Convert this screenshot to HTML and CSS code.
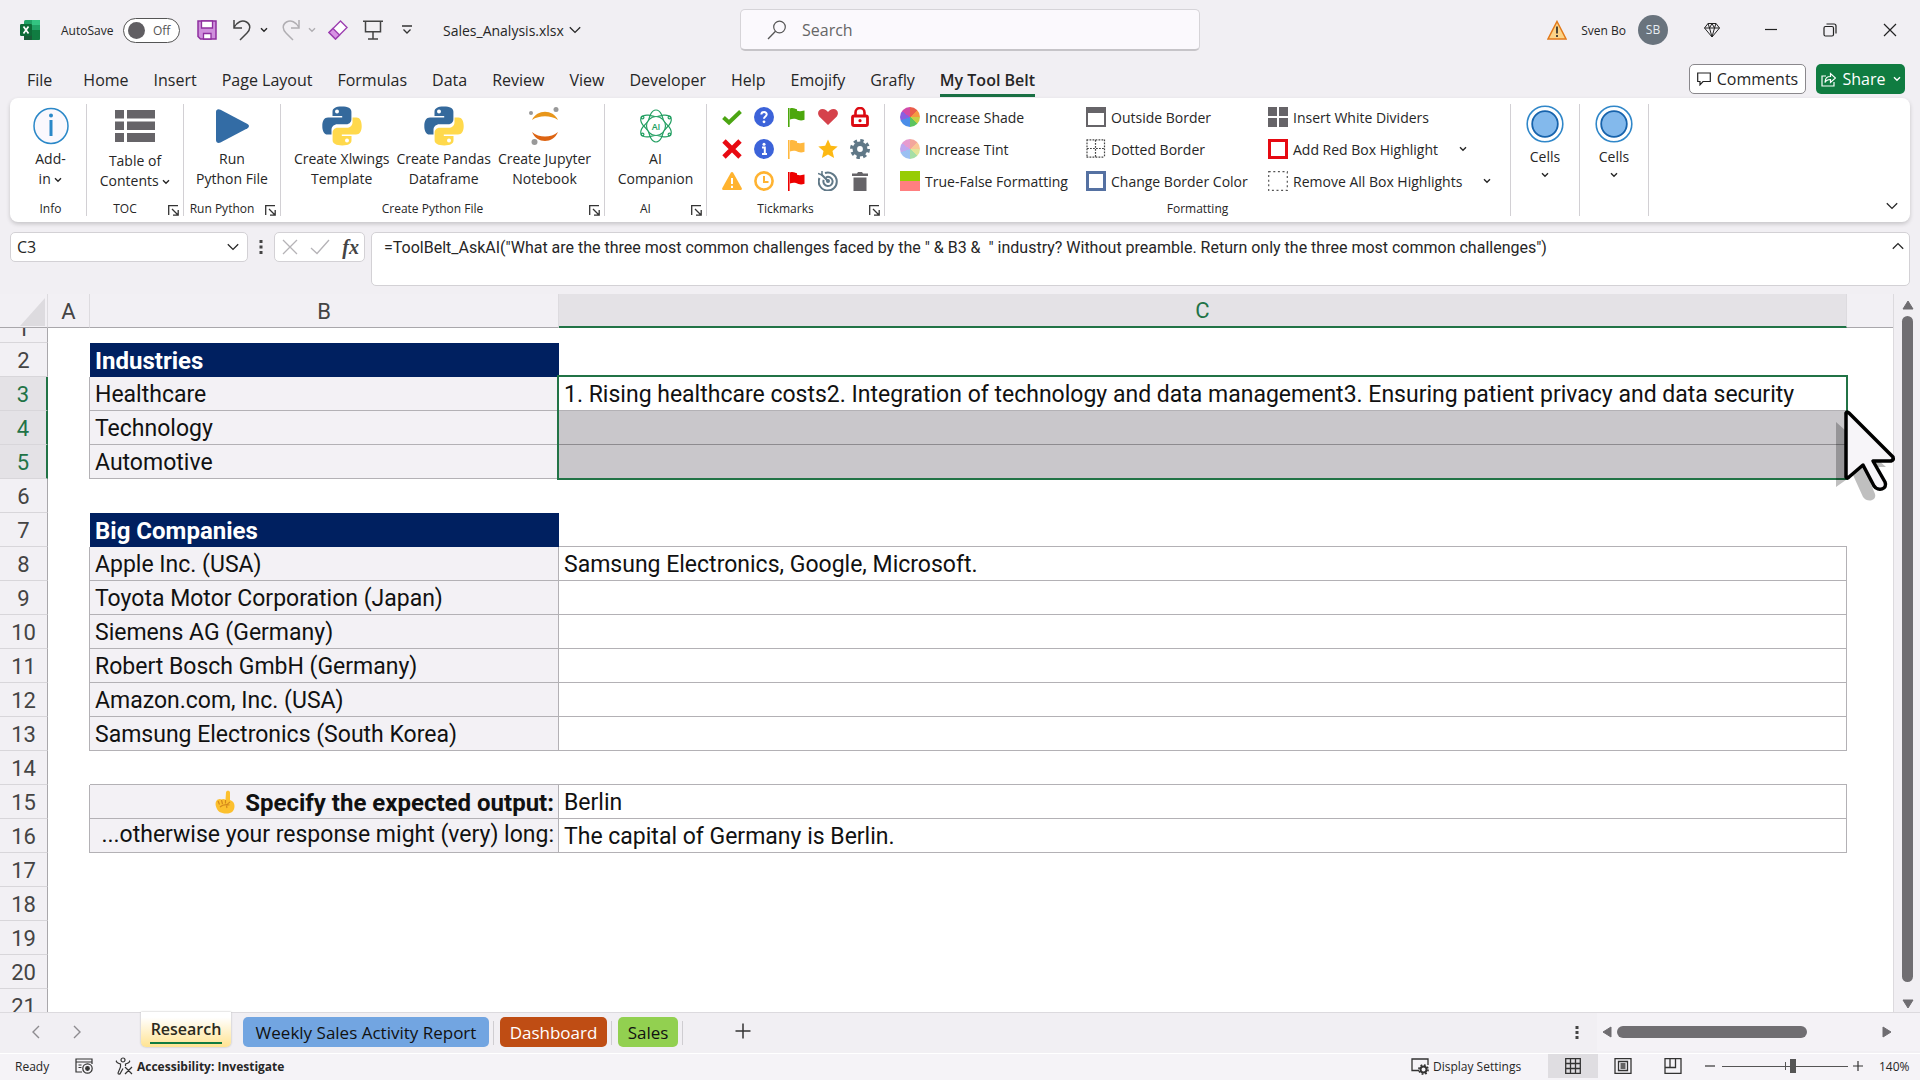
FILE: index.html
```html
<!DOCTYPE html>
<html lang="en">
<head>
<meta charset="utf-8">
<title>Sales_Analysis.xlsx</title>
<link rel="stylesheet" href="styles.css">
</head>
<body>
<svg class="sprite" aria-hidden="true">
  <symbol id="chev" viewBox="0 0 8 6"><path d="M1 1.2l3 3 3-3" fill="none" stroke="currentColor" stroke-width="1.4"/></symbol>
  <symbol id="chev-lg" viewBox="0 0 12 8"><path d="M.8 1.2L6 6.4l5.2-5.2" fill="none" stroke="currentColor" stroke-width="1.3"/></symbol>
  <symbol id="launch" viewBox="0 0 11 11"><path d="M10 .7H.7V10M4 4l5.5 5.5M10.2 5v5.2H5" fill="none" stroke="#333" stroke-width="1.3"/></symbol>
  <symbol id="python" viewBox="0 0 40 40">
    <path d="M19.8.5c-6.500 0-9.300 2-9.300 5.200V10h9.700v1.500H6C2.300 11.500.3 14.600.3 20s2 8.600 5.200 8.600h4v-4.800c0-3.300 2.600-5.600 5.900-5.600h9c2.900 0 5-2.300 5-5V5.700C29.400 2.400 26 .5 19.800.5z" fill="#34699c"/>
    <path d="M20.200 39.500c6.500 0 9.300-2 9.300-5.200V30h-9.700v-1.500H34c3.700 0 5.700-3.100 5.700-8.500s-2-8.600-5.200-8.600h-4v4.800c0 3.300-2.600 5.600-5.900 5.600h-9c-2.900 0-5 2.300-5 5v7.500c0 3.300 3.400 5.200 9.600 5.200z" fill="#ffd94c"/>
    <circle cx="15" cy="5.500" r="2" fill="#fff"/><circle cx="25" cy="34.500" r="2" fill="#fff"/>
  </symbol>
  <symbol id="flag" viewBox="0 0 20 20"><path d="M2 1h1.600v19H2zM4 1.500c3-1.200 5 .3 7 .8v1.500c2 .8 4 .5 7.500-.2v9.200c-3.500 1.200-6 .5-8.500-.7-2-.6-4-.3-6 .4z" fill="currentColor"/></symbol>
  <symbol id="cells" viewBox="0 0 38 38"><circle cx="19" cy="19" r="17.800" fill="#fff" stroke="#3087c9" stroke-width="1.600"/><circle cx="19" cy="19" r="12.800" fill="#83b9ec" stroke="#1763ac" stroke-width="1.800"/></symbol>
</svg>

<header class="titlebar">
  <div class="title-left">
    <svg class="logo" viewBox="0 0 20 20"><rect x="4" width="16" height="20" rx="1.500" fill="#21a366"/><path d="M12 0h8v5h-8z" fill="#33c481"/><path d="M4 10h8v10H4z" fill="#185c37"/><path d="M12 10h8v8.500a1.500 1.500 0 0 1-1.500 1.500H12z" fill="#107c41"/><rect y="4" width="12" height="12" rx="1.200" fill="#0d6b37"/><path d="M3.500 6.500l5 7M8.500 6.500l-5 7" stroke="#fff" stroke-width="1.700"/></svg>
    <span class="autosave">AutoSave</span>
    <button class="toggle" aria-label="AutoSave off"><i></i>Off</button>
    <button class="plain save" aria-label="Save"><svg width="20" height="20" viewBox="0 0 20 20"><path d="M1 1h18v18H3.500L1 16.500z" fill="#cf8fdc" stroke="#8e2f9f" stroke-width="1.500"/><path d="M4.500 1h11v7h-11zM6.500 19v-5.500h7.500V19z" fill="#fff" stroke="#8e2f9f" stroke-width="1.300"/></svg></button>
    <button class="plain undo" aria-label="Undo"><svg width="20" height="22" viewBox="0 0 20 22"><path d="M2 1v8h8M2 8.500C5 3 10 .5 14.500 3c5 3 3.500 8 .5 11l-7 7" fill="none" stroke="#444" stroke-width="1.500"/></svg></button>
    <svg class="c1" width="8" height="6"><use href="#chev"/></svg>
    <button class="plain redo" aria-label="Redo"><svg width="20" height="22" viewBox="0 0 20 22"><path d="M18 1v8h-8M18 8.500C15 3 10 .5 5.500 3c-5 3-3.500 8-.5 11l7 7" fill="none" stroke="#b0aeb2" stroke-width="1.500"/></svg></button>
    <svg class="c2" width="8" height="6"><use href="#chev"/></svg>
    <button class="plain eraser" aria-label="Clear"><svg width="20" height="20" viewBox="0 0 20 20"><path d="M12.500 1L19 7.500 7.500 19 1 12.500z" fill="#fff" stroke="#9c3fb0" stroke-width="1.400"/><path d="M5 8.500l6.500 6.500-4 4L1 12.500z" fill="#d793e3" stroke="#9c3fb0" stroke-width="1.400"/></svg></button>
    <button class="plain present" aria-label="Present"><svg width="20" height="20" viewBox="0 0 20 20"><path d="M0 1.200h20M2.500 1.200v10.600h15V1.200M10 12v6.800M5 19h10" fill="none" stroke="#444" stroke-width="1.500"/></svg></button>
    <button class="plain custom" aria-label="Customize toolbar"><svg width="10" height="10" viewBox="0 0 10 10"><path d="M0 1h10M1.500 4.500L5 8l3.500-3.500" fill="none" stroke="#333" stroke-width="1.300"/></svg></button>
    <button class="plain filename">Sales_Analysis.xlsx <svg width="12" height="8"><use href="#chev-lg"/></svg></button>
  </div>
  <label class="search">
    <svg width="20" height="20" viewBox="0 0 20 20"><circle cx="12.500" cy="7" r="5.800" fill="none" stroke="#555" stroke-width="1.200"/><path d="M8.500 11.200L1 19" stroke="#555" stroke-width="1.300"/></svg>
    <input type="text" placeholder="Search" aria-label="Search">
  </label>
  <div class="title-right">
    <svg width="20" height="20" viewBox="0 0 20 20"><path d="M10 1.500L19 19H1z" fill="#fcd488" stroke="#e27a1a" stroke-width="1.500"/><path d="M10 6.500v7M10 15v2" stroke="#222" stroke-width="1.600"/></svg>
    <span class="user">Sven Bo</span>
    <span class="avatar">SB</span>
    <button class="plain gem" aria-label="Premium"><svg width="16" height="16" viewBox="0 0 16 16"><path d="M4 1.500h8L15.500 6 8 15 .5 6zM.5 6h15M4 1.500L5.500 6 8 15l2.500-9L12 1.500M5.500 6L8 1.500 10.500 6" fill="none" stroke="#222" stroke-width="1"/></svg></button>
    <button class="plain win" aria-label="Minimize"><svg width="12" height="12" viewBox="0 0 12 12"><path d="M0 5.500h12" stroke="#222" stroke-width="1.200"/></svg></button>
    <button class="plain win" aria-label="Restore"><svg width="14" height="14" viewBox="0 0 14 14"><rect x="1" y="3.500" width="9.500" height="9.500" rx="1.500" fill="none" stroke="#222" stroke-width="1.200"/><path d="M3.500 1h7.500a2 2 0 0 1 2 2v7.500" fill="none" stroke="#222" stroke-width="1.200"/></svg></button>
    <button class="plain win" aria-label="Close"><svg width="14" height="14" viewBox="0 0 14 14"><path d="M1 1l12 12M13 1L1 13" stroke="#222" stroke-width="1.200"/></svg></button>
  </div>
</header>

<nav class="tabs">
  <a href="#" class="file">File</a><a href="#">Home</a><a href="#">Insert</a><a href="#">Page Layout</a><a href="#">Formulas</a><a href="#">Data</a><a href="#">Review</a><a href="#">View</a><a href="#">Developer</a><a href="#">Help</a><a href="#">Emojify</a><a href="#">Grafly</a><a href="#" class="current">My Tool Belt</a>
  <div class="tab-actions">
    <button class="comments"><svg width="14" height="14" viewBox="0 0 14 14"><path d="M.7 1h12.600v8.500H6L3 12.800V9.500H.7z" fill="none" stroke="#222" stroke-width="1.200"/></svg>Comments</button>
    <button class="share"><svg width="15" height="15" viewBox="0 0 15 15"><path d="M5 4H1v10h12v-4M4 10.500C4 6 6.500 4.500 9.500 4.500V1.500l5 4.500-5 4.500v-3C7 7.500 5 8.500 4 10.500z" fill="none" stroke="#fff" stroke-width="1.200"/></svg>Share<svg width="8" height="6"><use href="#chev"/></svg></button>
  </div>
</nav>

<section class="ribbon">
  <div class="group g-info">
    <div class="tools"><button class="big"><svg viewBox="0 0 38 38"><ellipse cx="19" cy="19" rx="17" ry="17.500" fill="#faf8fd" stroke="#2b88c8" stroke-width="1.500"/><path d="M19 13v16" stroke="#2b88c8" stroke-width="3"/><circle cx="19" cy="8.500" r="2" fill="#2b88c8"/></svg>Add-<br>in <svg class="dd"><use href="#chev"/></svg></button></div>
    <div class="name">Info</div>
  </div>
  <div class="group g-toc">
    <div class="tools"><button class="big low"><svg viewBox="0 0 38 38"><path d="M-1 3h9v8.500h-9zM11 3h28v8.500H11zM-1 14.500h9V23h-9zM11 14.500h28V23H11zM-1 26h9v9h-9zM11 26h28v9H11z" fill="#666468"/></svg>Table of<br>Contents <svg class="dd"><use href="#chev"/></svg></button></div>
    <div class="name">TOC<svg class="launch"><use href="#launch"/></svg></div>
  </div>
  <div class="group g-run">
    <div class="tools"><button class="big"><svg viewBox="0 0 38 38"><path d="M3 5c0-2.500 2-3.500 4.500-2.300l27 14.300c2 1.200 2 3 0 4.200L7.500 35.500C5 36.500 3 35.500 3 33z" fill="#336ca5"/></svg>Run<br>Python File</button></div>
    <div class="name">Run Python<svg class="launch"><use href="#launch"/></svg></div>
  </div>
  <div class="group g-python">
    <div class="tools">
      <button class="big"><svg class="py"><use href="#python"/></svg>Create Xlwings<br>Template</button>
      <button class="big"><svg class="py"><use href="#python"/></svg>Create Pandas<br>Dataframe</button>
      <button class="big"><svg viewBox="0 0 38 38"><path d="M6 13c5-11 21-11 26 0-7-5-19-5-26 0z" fill="#e8961a"/><path d="M6 25c5 12 21 12 26 0-7 6-19 6-26 0z" fill="#dd6412"/><circle cx="30" cy="2.500" r="2.500" fill="#999"/><circle cx="5" cy="6" r="2" fill="#999"/><circle cx="8.500" cy="35" r="3" fill="#999"/></svg>Create Jupyter<br>Notebook</button>
    </div>
    <div class="name">Create Python File<svg class="launch"><use href="#launch"/></svg></div>
  </div>
  <div class="group g-ai">
    <div class="tools"><button class="big"><svg viewBox="0 0 38 38" fill="none" stroke="#239f62" stroke-width="1.200"><ellipse cx="19" cy="19" rx="8" ry="16"/><ellipse cx="19" cy="19" rx="8" ry="17" transform="rotate(60 19 19)"/><ellipse cx="19" cy="19" rx="8" ry="17" transform="rotate(120 19 19)"/><circle cx="19" cy="19" r="9.500" fill="#fff"/><circle cx="5.500" cy="10.500" r="1.400"/><circle cx="32.500" cy="10.500" r="1.400"/><circle cx="5.500" cy="27.500" r="1.400"/><circle cx="32.500" cy="27.500" r="1.400"/><text x="19" y="23" text-anchor="middle" class="ai-text">AI</text></svg>AI<br>Companion</button></div>
    <div class="name">AI<svg class="launch"><use href="#launch"/></svg></div>
  </div>
  <div class="group g-tick">
    <div class="tools ticks">
      <button aria-label="Check"><svg viewBox="0 0 20 20"><path d="M1.500 10.500l5.500 5L18.500 4.500" fill="none" stroke="#4ba512" stroke-width="4"/></svg></button>
      <button aria-label="Question"><svg viewBox="0 0 20 20"><circle cx="10" cy="10" r="10" fill="#3c63d9"/><path d="M7.300 7.500c.2-3.500 5.600-3.200 5.400 0-.1 2-2.700 2-2.700 4.300" fill="none" stroke="#fff" stroke-width="2"/><circle cx="10" cy="14.800" r="1.400" fill="#fff"/></svg></button>
      <button class="green" aria-label="Green flag"><svg><use href="#flag"/></svg></button>
      <button aria-label="Heart"><svg viewBox="0 0 20 20"><path d="M10 18L1.200 9.500C-1.500 5.500 1 2 4.500 2 7 2 9 3.500 10 5c1-1.500 3-3 5.500-3 3.500 0 6 3.500 3.300 7.500z" fill="#d5424b"/></svg></button>
      <button aria-label="Lock"><svg viewBox="0 0 20 20"><rect x="2.500" y="9" width="15" height="9.500" rx="1.500" fill="#fff" stroke="#dc0a12" stroke-width="2.800"/><path d="M5.500 8V5.500a4.500 4.500 0 0 1 9 0V8" fill="none" stroke="#dc0a12" stroke-width="2.600"/><circle cx="10" cy="13.700" r="1.600" fill="#dc0a12"/></svg></button>
      <button aria-label="Cross"><svg viewBox="0 0 20 20"><path d="M2 2l16 16M18 2L2 18" stroke="#e80a12" stroke-width="4.800"/></svg></button>
      <button aria-label="Information"><svg viewBox="0 0 20 20"><circle cx="10" cy="10" r="10" fill="#3c63d9"/><path d="M8 8.500h2.800V15M8 15h5" fill="none" stroke="#fff" stroke-width="2"/><circle cx="10" cy="5.200" r="1.500" fill="#fff"/></svg></button>
      <button class="amber" aria-label="Amber flag"><svg><use href="#flag"/></svg></button>
      <button aria-label="Star"><svg viewBox="0 0 20 20"><path d="M10 .5l2.800 6.200 6.900.7-5.200 4.600 1.600 7L10 15.500 3.900 19l1.600-7L.3 7.400l6.900-.7z" fill="#fdb913"/></svg></button>
      <button aria-label="Settings"><svg viewBox="0 0 20 20"><circle cx="10" cy="10" r="8.400" fill="none" stroke="#607887" stroke-width="3.200" stroke-dasharray="3.400 3.200"/><circle cx="10" cy="10" r="5.200" fill="#fff" stroke="#607887" stroke-width="4.600"/></svg></button>
      <button aria-label="Warning"><svg viewBox="0 0 20 20"><path d="M8.800 1.800a1.400 1.400 0 0 1 2.400 0L19.700 17c.5 1-.2 2-1.200 2h-17c-1 0-1.700-1-1.200-2z" fill="#ffb32f"/><path d="M10 7v6M10 14.800v2.200" stroke="#fff" stroke-width="2"/></svg></button>
      <button aria-label="Clock"><svg viewBox="0 0 20 20"><circle cx="10" cy="10" r="8.600" fill="#fff" stroke="#ffb332" stroke-width="2.600"/><path d="M10 5v6h4.500" fill="none" stroke="#ffb332" stroke-width="2"/></svg></button>
      <button class="red" aria-label="Red flag"><svg><use href="#flag"/></svg></button>
      <button aria-label="Target"><svg viewBox="0 0 20 20" fill="none" stroke="#607887" stroke-width="2"><path d="M7 2a9 9 0 1 1-5.500 5M8 6.300a4.600 4.600 0 1 1-2.300 2.500M3 3l7 7" /><circle cx="10" cy="10" r="1"/><path d="M0 2.500L4 4V0" stroke-width="1.500"/></svg></button>
      <button aria-label="Delete"><svg viewBox="0 0 20 20"><path d="M2 2.500h5L8 1h4l1 1.500h5V5H2zM3.500 6.500h13V20h-13z" fill="#666468"/></svg></button>
    </div>
    <div class="name">Tickmarks<svg class="launch"><use href="#launch"/></svg></div>
  </div>
  <div class="group g-format">
    <div class="tools format">
      <button><i class="wheel"></i>Increase Shade</button>
      <button><svg viewBox="0 0 20 20"><path d="M1 1h18v18H1z" fill="#fff" stroke="#666468" stroke-width="2"/><path d="M0 0h20v6H0z" fill="#666468"/></svg>Outside Border</button>
      <button><svg viewBox="0 0 20 20"><path d="M0 0h9v9H0zM11 0h9v9h-9zM0 11h9v9H0zM11 11h9v9h-9z" fill="#666468"/></svg>Insert White Dividers</button>
      <button><i class="wheel tint"></i>Increase Tint</button>
      <button><svg viewBox="0 0 20 20"><path d="M1 .5v18M18.500 .5v18M.5 .8h18M.5 18.200h18M9.500 1v17M1 9.500h17" fill="none" stroke="#444" stroke-width="1.200" stroke-dasharray="1.800 1.200"/></svg>Dotted Border</button>
      <button><svg viewBox="0 0 20 20"><path d="M1.500 1.500h17v17h-17z" fill="#fff" stroke="#e60a12" stroke-width="3"/></svg>Add Red Box Highlight<svg class="dd"><use href="#chev"/></svg></button>
      <button><svg viewBox="0 0 20 20"><path d="M0 0h20v10H0z" fill="#97cc04"/><path d="M0 10h20v10H0z" fill="#ff7f80"/></svg>True-False Formatting</button>
      <button><svg viewBox="0 0 20 20"><path d="M1.500 1.500h17v17h-17z" fill="#fff" stroke="#5571a2" stroke-width="3"/></svg>Change Border Color</button>
      <button><svg viewBox="0 0 20 20"><path d="M.7.700h18.600v18.600H.7z" fill="none" stroke="#555" stroke-width="1.200" stroke-dasharray="2 2.600"/></svg>Remove All Box Highlights<svg class="dd"><use href="#chev"/></svg></button>
    </div>
    <div class="name">Formatting</div>
  </div>
  <div class="group g-cells"><div class="tools"><button class="big cells"><svg><use href="#cells"/></svg>Cells<svg class="dd"><use href="#chev"/></svg></button></div></div>
  <div class="group g-cells"><div class="tools"><button class="big cells"><svg><use href="#cells"/></svg>Cells<svg class="dd"><use href="#chev"/></svg></button></div></div>
  <button class="plain collapse" aria-label="Collapse ribbon"><svg width="12" height="8"><use href="#chev-lg"/></svg></button>
</section>

<section class="formula-row">
  <label class="namebox"><input type="text" value="C3" aria-label="Name box"><svg width="12" height="8"><use href="#chev-lg"/></svg></label>
  <svg class="dots" width="4" height="16" viewBox="0 0 4 16"><path d="M.5 1h3v3h-3zM.5 6.500h3v3h-3zM.5 12h3v3h-3z" fill="#444"/></svg>
  <div class="fx">
    <button class="plain" aria-label="Cancel"><svg width="16" height="16" viewBox="0 0 16 16"><path d="M1 1l14 14M15 1L1 15" stroke="#b5b3b7" stroke-width="1.300"/></svg></button>
    <button class="plain" aria-label="Enter"><svg width="20" height="16" viewBox="0 0 20 16"><path d="M1 9l6 5.500L19 1" fill="none" stroke="#b5b3b7" stroke-width="1.300"/></svg></button>
    <button class="plain fn">fx</button>
  </div>
  <div class="formula">
    <textarea rows="1" aria-label="Formula">=ToolBelt_AskAI("What are the three most common challenges faced by the " &amp; B3 &amp;  " industry? Without preamble. Return only the three most common challenges")</textarea>
    <svg class="up" width="12" height="8"><use href="#chev-lg"/></svg>
  </div>
</section>

<main class="sheet">
  <div class="grid">
    <table>
      <colgroup><col class="w-row"><col class="w-a"><col class="w-b"><col><col class="w-d"></colgroup>
      <thead><tr><th class="corner"><svg width="25" height="28" viewBox="0 0 25 28"><path d="M25 0v28H0z" fill="#dddbdf"/></svg></th><th>A</th><th>B</th><th class="on">C</th><th></th></tr></thead>
      <tbody>
        <tr class="first"><th><div>1</div></th><td></td><td></td><td></td><td></td></tr>
        <tr><th>2</th><td></td><td class="head">Industries</td><td></td><td></td></tr>
        <tr><th class="on">3</th><td></td><td class="fill">Healthcare</td><td class="box active">1. Rising healthcare costs2. Integration of technology and data management3. Ensuring patient privacy and data security
          <div class="selection"><svg class="cursor" width="76" height="108" viewBox="0 0 76 108"><path d="M7 21v65l17-12 10 22c4 6 14 4 12-3L35 66h22z" fill="#000" opacity=".25"/><path d="M17 12v64q1 2 3 0l14-12 11 21c4 6 14 3 11-4L44 60h18q3-1 2-4L20 12q-2-2-3 0z" fill="#f7f5f9" stroke="#000" stroke-width="3.500" stroke-linejoin="round"/></svg></div></td><td></td></tr>
        <tr><th class="on">4</th><td></td><td class="fill">Technology</td><td class="box picked"></td><td></td></tr>
        <tr><th class="on">5</th><td></td><td class="fill">Automotive</td><td class="box picked"></td><td></td></tr>
        <tr><th>6</th><td></td><td></td><td></td><td></td></tr>
        <tr><th>7</th><td></td><td class="head">Big Companies</td><td class="under"></td><td></td></tr>
        <tr><th>8</th><td></td><td class="fill">Apple Inc. (USA)</td><td class="box">Samsung Electronics, Google, Microsoft.</td><td></td></tr>
        <tr><th>9</th><td></td><td class="fill">Toyota Motor Corporation (Japan)</td><td class="box"></td><td></td></tr>
        <tr><th>10</th><td></td><td class="fill">Siemens AG (Germany)</td><td class="box"></td><td></td></tr>
        <tr><th>11</th><td></td><td class="fill">Robert Bosch GmbH (Germany)</td><td class="box"></td><td></td></tr>
        <tr><th>12</th><td></td><td class="fill">Amazon.com, Inc. (USA)</td><td class="box"></td><td></td></tr>
        <tr><th>13</th><td></td><td class="fill">Samsung Electronics (South Korea)</td><td class="box"></td><td></td></tr>
        <tr><th>14</th><td></td><td class="under left"></td><td class="under"></td><td></td></tr>
        <tr><th>15</th><td></td><td class="fill right strong"><svg class="hand" width="22" height="24" viewBox="0 0 22 24"><path d="M12 2.500c0-2.500 4-2.500 4 0V10c3 1 4.500 3 4.500 6 0 5-3 7.500-8 7.500-6 0-9-2-10.500-7C1 13.500 2 10 4 9.500c1.500-1 3-.5 3.500 0 1-.8 3-.8 4 .3z" fill="#fcc02e"/><path d="M4 11l1.500 3.500M7.500 10l1 4M11.500 10v3.500M6 17c3-3 7-2.500 9.500-2M16 12c-3 2-4 4-3 6" fill="none" stroke="#d4881c" stroke-width="1.200"/></svg>Specify the expected output:</td><td class="box">Berlin</td><td></td></tr>
        <tr><th>16</th><td></td><td class="fill right high">...otherwise your response might (very) long:</td><td class="box">The capital of Germany is Berlin.</td><td></td></tr>
        <tr><th>17</th><td></td><td></td><td></td><td></td></tr>
        <tr><th>18</th><td></td><td></td><td></td><td></td></tr>
        <tr><th>19</th><td></td><td></td><td></td><td></td></tr>
        <tr><th>20</th><td></td><td></td><td></td><td></td></tr>
        <tr><th>21</th><td></td><td></td><td></td><td></td></tr>
      </tbody>
    </table>
  </div>
  <div class="vscroll">
    <svg width="12" height="10" viewBox="0 0 12 10"><path d="M6 1l5 8H1z" fill="#6f6d71" stroke="#6f6d71" stroke-linejoin="round"/></svg>
    <i></i>
    <svg width="12" height="10" viewBox="0 0 12 10"><path d="M6 9L1 1h10z" fill="#6f6d71" stroke="#6f6d71" stroke-linejoin="round"/></svg>
  </div>
</main>

<nav class="sheetbar">
  <div class="arrows"><svg width="8" height="14" viewBox="0 0 8 14"><path d="M7 1L1 7l6 6" fill="none" stroke="#8d8b8f" stroke-width="1.400"/></svg><svg width="8" height="14" viewBox="0 0 8 14"><path d="M1 1l6 6-6 6" fill="none" stroke="#8d8b8f" stroke-width="1.400"/></svg></div>
  <button class="research"><span>Research</span></button>
  <div class="slot"><button class="weekly">Weekly Sales Activity Report</button></div>
  <div class="slot"><button class="dash">Dashboard</button></div>
  <div class="slot last"><button class="sales">Sales</button></div>
  <button class="plain add" aria-label="New sheet"><svg width="16" height="16" viewBox="0 0 16 16"><path d="M8 .5v15M.5 8h15" stroke="#333" stroke-width="1.500"/></svg></button>
  <div class="hwrap">
    <svg width="4" height="16" viewBox="0 0 4 16"><path d="M.5 2h3v3h-3zM.5 7h3v3h-3zM.5 12h3v3h-3z" fill="#444"/></svg>
    <div class="hscroll">
      <svg width="10" height="12" viewBox="0 0 10 12"><path d="M1 6l8-5v10z" fill="#6f6d71" stroke="#6f6d71" stroke-linejoin="round"/></svg>
      <div class="track"><i></i></div>
      <svg width="10" height="12" viewBox="0 0 10 12"><path d="M9 6L1 1v10z" fill="#6f6d71" stroke="#6f6d71" stroke-linejoin="round"/></svg>
    </div>
  </div>
</nav>

<footer class="status">
  <span class="ready">Ready</span>
  <svg class="rec" width="18" height="16" viewBox="0 0 18 16" fill="none" stroke="#333" stroke-width="1.200"><path d="M7 14H1V1h16v5M1 4h16M3.500 7h3M3.500 9.500h3"/><circle cx="12.500" cy="10.500" r="4.700"/><circle cx="12.500" cy="10.500" r="1.800" fill="#333"/></svg>
  <svg width="18" height="18" viewBox="0 0 18 18" fill="none" stroke="#333" stroke-width="1.200"><circle cx="8" cy="3" r="2"/><path d="M1.500 3.500C.5 5 3 6 5.500 7v3L3 16c0 1.500 2 1.500 2.500 0L8 11.500M14.500 3.500c1 1.500-1.500 2.500-4 3.500v2M10 10l7 7M17 10l-7 7"/></svg>
  <strong>Accessibility: Investigate</strong>
  <div class="status-right">
    <svg width="18" height="18" viewBox="0 0 18 18" fill="none" stroke="#333" stroke-width="1.300"><path d="M7 13.500H1V2h16v6M4 13.500h4"/><circle cx="12.500" cy="12.500" r="3" stroke-width="2"/><circle cx="12.500" cy="12.500" r="4.600" stroke-dasharray="1.800 1.800" stroke-width="1.600"/></svg>
    <span class="disp">Display Settings</span>
    <button class="plain view sel" aria-label="Normal view"><svg width="16" height="16" viewBox="0 0 16 16"><path d="M.7.700h14.600v14.600H.7zM5.500.7v14.600M10.500.7v14.600M.7 5.500h14.600M.7 10.500h14.600" fill="none" stroke="#333" stroke-width="1.300"/></svg></button>
    <button class="plain view" aria-label="Page layout view"><svg width="18" height="16" viewBox="0 0 18 16"><path d="M1 .7h16v14.600H1zM4.500 3.500h9v9h-9zM6.500 6h5M6.500 8h5M6.500 10h5" fill="none" stroke="#333" stroke-width="1.300"/></svg></button>
    <button class="plain view" aria-label="Page break view"><svg width="18" height="16" viewBox="0 0 18 16"><path d="M1 .7h16v14.600H1zM1 9.500h10.500V.7M6 .7v8.800" fill="none" stroke="#333" stroke-width="1.300"/></svg></button>
    <svg class="minus" width="10" height="10" viewBox="0 0 10 10"><path d="M0 5h10" stroke="#333" stroke-width="1.200"/></svg>
    <input type="range" min="0" max="100" value="57" aria-label="Zoom">
    <svg width="10" height="10" viewBox="0 0 10 10"><path d="M0 5h10M5 0v10" stroke="#333" stroke-width="1.200"/></svg>
    <span class="pct">140%</span>
  </div>
</footer>
</body>
</html>
```
FILE: styles.css
```css
* { box-sizing: border-box; }
body {
  margin: 0;
  height: 100vh;
  display: flex;
  flex-direction: column;
  overflow: hidden;
  background: #f1eff3;
  color: #262626;
  font-family: "Open Sans", "Noto Sans", sans-serif;
  font-size: 14px;
}
svg { flex: none; display: block; }
.sprite { display: none; }
button { font: inherit; color: inherit; margin: 0; padding: 0; border: 0; background: none; white-space: nowrap; }
.plain { display: flex; align-items: center; }
input, textarea { font: inherit; color: inherit; border: 0; padding: 0; background: none; outline: none; min-width: 0; }
a { color: inherit; text-decoration: none; }

/* title bar */
.titlebar { display: grid; grid-template-columns: 740fr 460fr 720fr; height: 60px; align-items: center; flex: none; }
.title-left { display: flex; align-items: center; padding-left: 20px; }
.logo { width: 20px; height: 20px; }
.autosave { font-size: 12px; width: 54px; margin: 0 8px 0 21px; }
.toggle { display: flex; align-items: center; gap: 8px; width: 57px; height: 25px; padding-left: 4px; border: 1px solid #555; border-radius: 13px; background: #fff; font-size: 12px; color: #555; }
.toggle i { width: 17px; height: 17px; border-radius: 50%; background: #605e62; }
.save { margin-left: 17px; }
.undo { margin-left: 15px; }
.c1 { margin-left: 8px; }
.redo { margin-left: 13px; }
.c2 { margin-left: 7px; color: #b0aeb2; }
.eraser { margin-left: 12px; }
.present { margin-left: 15px; }
.custom { margin-left: 19px; }
.filename { margin-left: 31px; gap: 5px; }
.search { display: flex; align-items: center; gap: 15px; height: 42px; padding: 0 26px; background: #fbf9fd; border: 1px solid #d6d4d8; border-bottom: 2px solid #c6c4c8; border-radius: 5px; font-size: 16px; }
.search input { flex: 1; }
.search input::placeholder { color: #666; opacity: 1; }
.title-right { display: flex; align-items: center; justify-content: flex-end; padding-right: 23px; }
.user { font-size: 12px; margin: 0 12px 0 14px; }
.avatar { width: 30px; height: 30px; border-radius: 50%; background: #69737d; color: #e8edf2; font-size: 12px; line-height: 30px; text-align: center; }
.gem { margin: 0 45px 0 36px; }
.win { margin-right: 46px; }
.win:last-child { margin-right: 0; }

/* ribbon tabs */
.tabs { display: flex; gap: 25px; align-items: center; height: 38px; padding: 0 15px 0 27px; font-size: 16px; flex: none; }
.tabs a { line-height: 30px; height: 35px; padding-top: 3px; white-space: nowrap; }
.tabs .file { margin-right: 6px; }
.tabs .current { font-weight: 600; border-bottom: 3px solid #1a7044; }
.tab-actions { display: flex; gap: 10px; margin-left: auto; }
.comments, .share { display: flex; align-items: center; justify-content: center; height: 30px; border-radius: 5px; }
.comments { gap: 6px; width: 117px; border: 1px solid #8a888c; background: #fff; }
.share { gap: 7px; width: 89px; background: #107c41; color: #fff; }

/* ribbon */
.ribbon { display: flex; height: 124px; margin: 0 10px; padding: 6px 0; background: #fff; border-radius: 8px; box-shadow: 0 2px 4px #0000002e; flex: none; }
.group { display: flex; flex-direction: column; border-right: 1px solid #d2d0d4; height: 112px; flex: none; }
.g-info { width: 77px; padding-left: 5px; }
.g-toc, .g-run { width: 97px; }
.g-python { width: 324px; }
.g-ai { width: 102px; }
.g-tick { width: 178px; }
.g-format { width: 626px; }
.g-cells { width: 69px; }
.tools { display: flex; justify-content: center; align-items: flex-start; flex: 1; padding-top: 1px; }
.big { display: block; text-align: center; line-height: 20px; }
.big > svg:first-child { width: 38px; height: 38px; margin: 2px auto 4px; overflow: visible; }
.big > svg.py { width: 40px; height: 40px; margin: 1px auto 3px; }
.low > svg:first-child { margin-bottom: 6px; }
.dd { width: 8px; height: 6px; display: inline-block; vertical-align: middle; }
.big.cells > svg:first-child { margin: 0 auto 4px; }
.cells > .dd { display: block; margin: 5px auto 0; }
.g-python .tools { gap: 7px; }
.name { position: relative; height: 14px; line-height: 14px; text-align: center; font-size: 12px; }
.g-toc .name, .g-run .name, .g-python .name, .g-ai .name, .g-tick .name { padding-right: 20px; }
.launch { position: absolute; right: 4px; top: 3px; width: 11px; height: 11px; }
.ai-text { font: 600 9px "Open Sans", sans-serif; fill: #239f62; stroke: none; }
.ticks { display: grid; grid-template-columns: repeat(5, 20px); grid-auto-rows: 20px; gap: 12px; padding: 3px 15px 0; justify-content: start; }
.ticks svg { width: 20px; height: 20px; }
.green { color: #4ca70c; }
.amber { color: #ffb83f; }
.red { color: #ed0000; }
.format { display: grid; grid-template-columns: 186px 182px 1fr; grid-auto-rows: 20px; gap: 12px 0; padding: 3px 0 0 15px; justify-content: stretch; }
.format button { display: flex; align-items: center; gap: 5px; height: 20px; }
.format svg:first-child { width: 20px; height: 20px; }
.format .dd { margin-left: 16px; }
.wheel { width: 20px; height: 20px; border-radius: 50%; background: conic-gradient(#ea5d4b 0 45deg, #f49a42 45deg 90deg, #c8cf45 90deg 135deg, #5cc45e 135deg 180deg, #4a8de8 180deg 250deg, #8a5ee0 250deg 305deg, #d24aa8 305deg); }
.tint { opacity: .55; }
.collapse { margin: auto 12px 6px auto; }

/* formula row */
.formula-row { display: flex; align-items: flex-start; margin: 10px 10px 0; height: 62px; flex: none; }
.namebox, .fx, .formula { display: flex; background: #fff; border: 1px solid #d3d1d5; border-radius: 5px; }
.namebox { width: 238px; height: 30px; align-items: center; justify-content: space-between; padding: 0 8px 0 6px; }
.namebox input { width: 160px; font-size: 16px; }
.dots { margin: 7px 11px 0; }
.fx { width: 91px; height: 30px; align-items: center; justify-content: space-between; padding: 0 5px 0 7px; margin-right: 6px; }
.fn { font: italic 700 20px "Liberation Serif", serif; color: #444; }
.formula { flex: 1; height: 54px; padding: 5px 5px 0 12px; justify-content: space-between; }
.formula textarea { flex: 1; resize: none; font: 16px/20px Roboto, sans-serif; white-space: pre; overflow: hidden; height: 40px; }
.up { transform: rotate(180deg); margin-top: 4px; }

/* worksheet */
.sheet { flex: 1; display: flex; min-height: 0; }
.grid { flex: 1; overflow-x: visible; overflow-y: clip; min-width: 0; border-right: 1px solid #dcdade; background: #fff; }
table { width: 100%; table-layout: fixed; border-collapse: separate; border-spacing: 0; font: 23px/30px Roboto, sans-serif; color: #111; }
.w-row { width: 48px; }
.w-a { width: 42px; }
.w-b { width: 469px; }
.w-d { width: 46px; }
th { font-weight: 400; font-size: 22px; color: #444; background: #f2f0f4; padding: 0; }
thead th { height: 34px; padding-top: 2px; border-bottom: 1px solid #a9a7ab; border-right: 1px solid #dddbdf; }
thead th:last-child { border-right: 0; }
thead .on { background: #e4e2e6; color: #217346; border-bottom: 2px solid #217346; }
.corner svg { margin: 1px 0 0 20px; }
tbody th { border-right: 1px solid #a9a7ab; border-bottom: 1px solid #d8d6da; }
tbody th.on { background: #e4e2e6; color: #217346; border-right: 2px solid #217346; }
tbody th, td { height: 34px; padding-top: 2px; padding-bottom: 0; }
td { padding-left: 5px; padding-right: 4px; white-space: nowrap; }
.first th, .first td { height: 15px; padding: 0; }
.first div { height: 14px; display: flex; align-items: flex-end; justify-content: center; overflow: hidden; line-height: 26px; }
.head { background: #002060; color: #fff; font-weight: 700; font-size: 24px; }
.fill { background: #f3f1f5; box-shadow: -1px 0 #b3b1b5; border-right: 1px solid #b3b1b5; border-bottom: 1px solid #b3b1b5; }
.box { border-right: 1px solid #b3b1b5; border-bottom: 1px solid #b3b1b5; }
.under { border-bottom: 1px solid #b3b1b5; }
.right { text-align: right; }
.strong { font-weight: 700; font-size: 24px; }
.high { padding-bottom: 2px; padding-top: 0; }
.hand { display: inline-block; vertical-align: -3px; margin-right: 9px; }
.picked { background: #c9c7cb; border-bottom-color: #8d8b8f; }
.active { position: relative; }
.selection { position: absolute; top: -2px; left: -2px; right: -2px; height: 105px; border: 2px solid #217346; }
.cursor { position: absolute; left: calc(100% - 17px); top: 24px; z-index: 2; }
.vscroll { width: 26px; display: flex; flex-direction: column; align-items: center; gap: 6px; padding: 6px 0 3px 1px; }
.vscroll i { width: 11px; height: 666px; flex: 0 1 666px; border-radius: 6px; background: #706e72; margin-bottom: auto; }

/* sheet tabs */
.sheetbar { display: flex; height: 41px; border-top: 1px solid #dcdade; font-size: 17px; flex: none; }
.arrows { display: flex; width: 141px; padding: 12px 0 0 32px; gap: 33px; }
.research { height: 35px; margin-top: -1px; width: 90px; border-radius: 0 0 5px 5px; background: linear-gradient(#fff 15%, #ffe391); box-shadow: 0 0 2px #aaa; font-size: 16px; font-weight: 600; color: #2b2a20; }
.research span { display: block; margin: 0 9px; line-height: 26px; border-bottom: 2px solid #107c41; }
.slot { padding: 4px 5px 0 6px; background: linear-gradient(#cfcdd1, #cfcdd1) right 8px / 1px 24px no-repeat; }
.slot button { height: 30px; border-radius: 5px; color: #111; }
.research + .slot { padding-left: 12px; }
.slot .weekly { width: 246px; background: #72a5e1; }
.slot .dash { width: 107px; background: #bf4d14; color: #fff; }
.slot .sales { width: 60px; background: #92d050; }
.add { margin-left: 52px; height: 36px; }
.hwrap { display: flex; align-items: center; margin-left: auto; width: 345px; gap: 18px; padding-bottom: 2px; }
.hscroll { flex: 1; align-self: stretch; display: flex; align-items: center; gap: 5px; padding: 0 28px 0 5px; background: #f4f2f6; }
.track { flex: 1; }
.track i { display: block; width: 73%; height: 12px; border-radius: 6px; background: #706e72; }

/* status bar */
.status { display: flex; align-items: center; height: 27px; padding: 0 0 2px 15px; border-top: 1px solid #fff; background: #f5f3f7; font-size: 12px; white-space: nowrap; flex: none; }
.ready { width: 60px; }
.rec { margin-right: 22px; }
.status strong { font-weight: 700; margin-left: 4px; }
.status-right { display: flex; align-items: center; align-self: stretch; margin-left: auto; padding-right: 9px; }
.disp { margin-left: 4px; width: 115px; }
.view { width: 50px; align-self: stretch; justify-content: center; }
.sel { background: #dfdde1; }
.minus { margin-left: 7px; }
input[type="range"] { appearance: none; width: 126px; height: 14px; margin: 0 5px 0 7px; background: linear-gradient(#555, #555) center / 100% 1px no-repeat, linear-gradient(#555, #555) center / 1px 8px no-repeat; }
input[type="range"]::-webkit-slider-thumb { appearance: none; width: 6px; height: 14px; background: #555; }
.pct { width: 32px; margin-left: 16px; }
```
